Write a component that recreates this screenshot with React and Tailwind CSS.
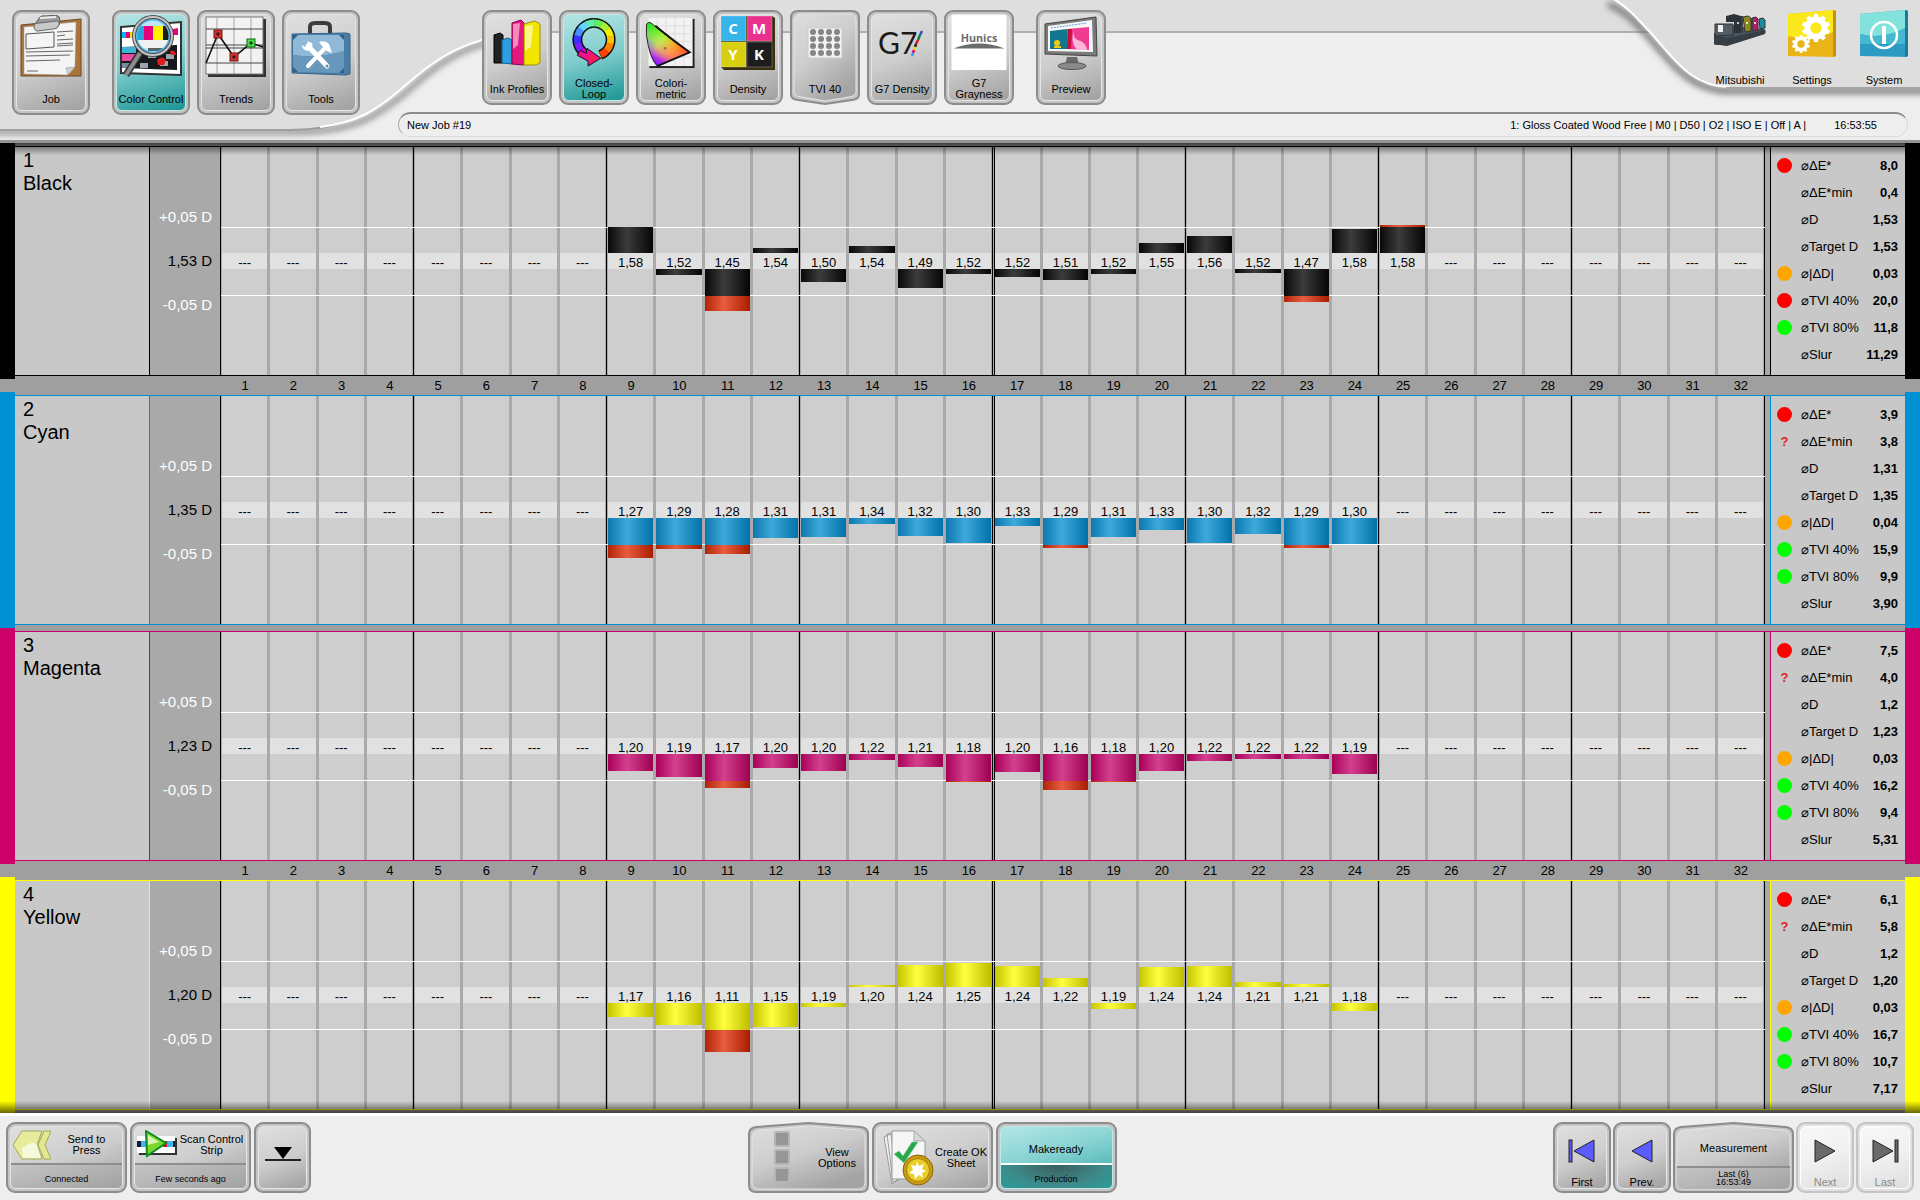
import clsx from "clsx";

const LIMIT_UP = 26;
const LIMIT_DOWN = 27;

const GREEN = "bg-[#00ff00]";
const RED = "bg-[#ff0000]";
const ORANGE = "bg-[#ffa500]";

// zones: [ink zone, density, deviation in px], positive deviations grow upwards
const INKS = [
  {
    no: 1,
    name: "Black",
    target: "1,53",
    side: "bg-black",
    border: "border-black",
    bar: "bg-[linear-gradient(90deg,#080808,#3c3c3c_42%,#050505)]",
    zones: [
      [9, "1,58", 26], [10, "1,52", -6], [11, "1,45", -42], [12, "1,54", 5],
      [13, "1,50", -13], [14, "1,54", 7], [15, "1,49", -19], [16, "1,52", -5],
      [17, "1,52", -8], [18, "1,51", -11], [19, "1,52", -5], [20, "1,55", 10],
      [21, "1,56", 17], [22, "1,52", -4], [23, "1,47", -33], [24, "1,58", 24],
      [25, "1,58", 28],
    ],
    stats: [
      [RED, "ΔE*", "8,0"],
      [null, "ΔE*min", "0,4"],
      [null, "D", "1,53"],
      [null, "Target D", "1,53"],
      [ORANGE, "|ΔD|", "0,03"],
      [RED, "TVI 40%", "20,0"],
      [GREEN, "TVI 80%", "11,8"],
      [null, "Slur", "11,29"],
    ],
  },
  {
    no: 2,
    name: "Cyan",
    target: "1,35",
    side: "bg-[#0091d4]",
    border: "border-[#0091d4]",
    bar: "bg-[linear-gradient(90deg,#0a77ae,#3fa9da_42%,#0072a8)]",
    zones: [
      [9, "1,27", -40], [10, "1,29", -31], [11, "1,28", -36], [12, "1,31", -20],
      [13, "1,31", -19], [14, "1,34", -6], [15, "1,32", -18], [16, "1,30", -25],
      [17, "1,33", -8], [18, "1,29", -30], [19, "1,31", -19], [20, "1,33", -12],
      [21, "1,30", -25], [22, "1,32", -16], [23, "1,29", -30], [24, "1,30", -26],
    ],
    stats: [
      [RED, "ΔE*", "3,9"],
      ["?", "ΔE*min", "3,8"],
      [null, "D", "1,31"],
      [null, "Target D", "1,35"],
      [ORANGE, "|ΔD|", "0,04"],
      [GREEN, "TVI 40%", "15,9"],
      [GREEN, "TVI 80%", "9,9"],
      [null, "Slur", "3,90"],
    ],
  },
  {
    no: 3,
    name: "Magenta",
    target: "1,23",
    side: "bg-[#cc0069]",
    border: "border-[#cc0069]",
    bar: "bg-[linear-gradient(90deg,#a80058,#d4408f_42%,#9e0052)]",
    zones: [
      [9, "1,20", -17], [10, "1,19", -23], [11, "1,17", -34], [12, "1,20", -14],
      [13, "1,20", -17], [14, "1,22", -6], [15, "1,21", -13], [16, "1,18", -28],
      [17, "1,20", -18], [18, "1,16", -36], [19, "1,18", -28], [20, "1,20", -17],
      [21, "1,22", -7], [22, "1,22", -5], [23, "1,22", -5], [24, "1,19", -20],
    ],
    stats: [
      [RED, "ΔE*", "7,5"],
      ["?", "ΔE*min", "4,0"],
      [null, "D", "1,2"],
      [null, "Target D", "1,23"],
      [ORANGE, "|ΔD|", "0,03"],
      [GREEN, "TVI 40%", "16,2"],
      [GREEN, "TVI 80%", "9,4"],
      [null, "Slur", "5,31"],
    ],
  },
  {
    no: 4,
    name: "Yellow",
    target: "1,20",
    side: "bg-[#ffff00]",
    border: "border-[#ffff00]",
    bar: "bg-[linear-gradient(90deg,#c4c400,#ffff40_42%,#bebe00)]",
    zones: [
      [9, "1,17", -14], [10, "1,16", -22], [11, "1,11", -49], [12, "1,15", -24],
      [13, "1,19", -4], [14, "1,20", 2], [15, "1,24", 22], [16, "1,25", 24],
      [17, "1,24", 21], [18, "1,22", 9], [19, "1,19", -6], [20, "1,24", 20],
      [21, "1,24", 21], [22, "1,21", 5], [23, "1,21", 3], [24, "1,18", -8],
    ],
    stats: [
      [RED, "ΔE*", "6,1"],
      ["?", "ΔE*min", "5,8"],
      [null, "D", "1,2"],
      [null, "Target D", "1,20"],
      [ORANGE, "|ΔD|", "0,03"],
      [GREEN, "TVI 40%", "16,7"],
      [GREEN, "TVI 80%", "10,7"],
      [null, "Slur", "7,17"],
    ],
  },
];

const GROUPS = [0, 1, 2, 3, 4, 5, 6, 7].map((g) => [1, 2, 3, 4].map((i) => g * 4 + i));

/* ---------- icons ---------- */

function JobIcon() {
  return (
    <svg width="62" height="62" viewBox="0 0 62 62">
      <path d="M1 10 L61 4 V61 L1 61 Z" fill="#a9733a" stroke="#6e4a22" />
      <path d="M4 12 L56 7 L55 52 L48 60 L4 59 Z" fill="#f4f4f4" stroke="#999" strokeWidth="0.5" />
      <path d="M55 52 L48 60 L46 53 Z" fill="#cfcfcf" stroke="#888" strokeWidth="0.5" />
      <path d="M6 19 L34 17 V32 L6 34 Z" fill="none" stroke="#555" />
      <path d="M37 17 L53 16 M37 21 L45 20 M37 25 L53 24 M37 29 L53 28 M37 31 L53 30 M6 37 L53 36 M6 41 L50 40 M6 46 L40 45 M7 56 H18" stroke="#666" />
      <path d="M18 5 Q20 0 26 1 L36 0 Q40 1 40 5 L39 10 L17 12 L14 11 Z" fill="#9b9b9b" stroke="#555" />
      <path d="M14 11 Q14 8 20 8 L36 6 Q40 6 39 10 Q38 14 33 14 L18 16 Q14 16 14 11 Z" fill="#c9c9c9" stroke="#666" />
      <path d="M20 3 L36 2" stroke="#eee" strokeWidth="2" />
    </svg>
  );
}

function ColorControlIcon() {
  return (
    <svg width="66" height="62" viewBox="0 0 66 62">
      <path d="M3 12 L63 7 V60 L3 58 Z" fill="#fff" stroke="#333" strokeWidth="2" />
      <path d="M4 17 H8 V23 H4 Z" fill="#00b7f0" />
      <path d="M8 17 H12 V23 H8 Z" fill="#e6007e" />
      <path d="M12 17 H16 V23 H12 Z" fill="#ffe800" />
      <path d="M55 14 L60 13 V20 H55 Z" fill="#e6007e" />
      <path d="M4 32 L59 30 V55 L4 53 Z" fill="#16181c" />
      <path d="M4 32 H18 V38 H4 Z" fill="#3db4d8" />
      <path d="M4 39 H17 V46 H4 Z" fill="#e64aa0" />
      <path d="M4 48 H14 V53 H4 Z" fill="#7b8b9c" />
      <path d="M30 38 H38 V43 H30 Z M48 39 H56 V44 H48 Z M22 48 H30 V53 H22 Z M42 46 H50 V51 H42 Z" fill="#9aa6ac" />
      <path d="M39 45 Q44 40 48 45 L46 50 H40 Z M52 36 Q57 34 58 40 H53 Z" fill="#e01b24" />
      <circle cx="35" cy="21" r="19" fill="#bfe6f7" />
      <clipPath id="lens">
        <circle cx="35" cy="21" r="18" />
      </clipPath>
      <g clipPath="url(#lens)">
        <rect x="16" y="11" width="10" height="14" fill="#2aa5dc" />
        <rect x="26" y="11" width="9" height="14" fill="#e6007e" />
        <rect x="35" y="11" width="10" height="14" fill="#fff000" />
        <rect x="45" y="11" width="10" height="14" fill="#1c1c1c" />
        <rect x="16" y="25" width="40" height="8" fill="#f1f1f1" />
        <rect x="30" y="33" width="16" height="3" fill="#56636b" />
      </g>
      <circle cx="35" cy="21" r="16.5" fill="none" stroke="#55b8ea" strokeWidth="2" />
      <circle cx="35" cy="21" r="19" fill="none" stroke="#4a4a4a" strokeWidth="4" />
      <circle cx="35" cy="21" r="19" fill="none" stroke="#c4c4c4" strokeWidth="2" />
      <path d="M22 38 L8 60" stroke="#333" strokeWidth="7" />
      <path d="M22 38 L8 60" stroke="#8d8d8d" strokeWidth="4" />
    </svg>
  );
}

function TrendsIcon() {
  return (
    <svg width="62" height="62" viewBox="0 0 62 62">
      <rect x="3" y="4" width="58" height="58" fill="#333" />
      <rect x="1" y="2" width="57" height="57" fill="#f2f2f2" stroke="#777" />
      <path d="M12 2 V59 M29 2 V59 M46 2 V59" stroke="#a5a5a5" />
      <path d="M1 14 H58 M1 30 H58 M1 33 H58 M1 48 H58" stroke="#444" />
      <path d="M1 48 L13 19 L29 42 L46 28 L58 32" fill="none" stroke="#111" strokeWidth="1.6" />
      <rect x="9" y="15" width="8" height="8" fill="#cf3434" stroke="#7a1010" />
      <rect x="25" y="38" width="8" height="8" fill="#cf3434" stroke="#7a1010" />
      <rect x="42" y="24" width="8" height="8" fill="#4be04b" stroke="#0c6a0c" />
      <path d="M13 17 V21 M11 19 H15 M29 40 V44 M27 42 H31 M46 26 V30 M44 28 H48" stroke="#111" />
    </svg>
  );
}

function ToolsIcon() {
  return (
    <svg width="62" height="62" viewBox="0 0 62 62">
      <path d="M20 19 V12 Q20 8 25 8 H35 Q40 8 40 12 V19" fill="none" stroke="#3c3c3c" strokeWidth="4" />
      <path d="M2 19 L56 18 L60 19 V59 L56 60 L2 58 Z" fill="#4a7da5" stroke="#39658a" />
      <path d="M3 20 H54 V36 Q28 44 3 40 Z" fill="#8fb9d6" />
      <path d="M3 40 Q28 44 54 36 V58 L3 57 Z" fill="#6797bb" />
      <path d="M3 20 h5 l-5 5z M54 20 h-5 l5 5z M3 57 h5 l-5 -5z M54 58 h-5 l5 -5z" fill="#2f5f8a" />
      <path d="M18 31 L37 51" stroke="#fff" strokeWidth="5" strokeLinecap="round" />
      <path d="M12 30 Q12 35 18 36 Q24 34 22 28 L17 26 L19 31 L15 32 Z" fill="#fff" />
      <path d="M36 32 L18 51" stroke="#fff" strokeWidth="4" strokeLinecap="round" />
      <path d="M29 27 Q35 25 39 29 L42 38 L37 36 L33 32 Z" fill="#fff" />
      <circle cx="37" cy="51" r="1.5" fill="#5d8db1" />
    </svg>
  );
}

function InkProfilesIcon() {
  return (
    <svg width="56" height="56" viewBox="0 0 56 56">
      <path d="M5 20 L11 18 L14 20 V48 L5 48 Z" fill="#222" stroke="#000" />
      <path d="M13 25 L19 23 L23 25 V49 L13 48 Z" fill="#2d9fe0" stroke="#0c5f94" />
      <path d="M23 8 L32 5 L35 8 V50 L23 49 Z" fill="#e3187c" stroke="#8f004a" />
      <path d="M24 9 L31 8 L29 30 L24 34 Z" fill="#f58abf" />
      <path d="M35 9 L46 6 L51 9 V48 L47 50 L35 50 Z" fill="#f2e500" stroke="#9c9300" />
      <path d="M36 11 L44 10 L42 32 L36 36 Z" fill="#fbf58a" />
    </svg>
  );
}

// arc of the loop, angles in degrees clockwise from the top
function arc(from, to) {
  const p = (a) => {
    const r = ((a - 90) * Math.PI) / 180;
    return `${28 + 17 * Math.cos(r)} ${25 + 17 * Math.sin(r)}`;
  };
  return `M${p(from)} A17 17 0 0 1 ${p(to)}`;
}

function ClosedLoopIcon() {
  const colors = [
    "#d000d0", "#7a20ff", "#3a30ff", "#4a90ff", "#60d8ff", "#60f0b0",
    "#60f060", "#a8f030", "#f0f000", "#ffc000", "#ff8000", "#ff4000",
  ];
  return (
    <svg width="56" height="56" viewBox="0 0 56 56">
      <path d={arc(205, 359)} fill="none" stroke="#111" strokeWidth="10" />
      <path d={arc(359, 518)} fill="none" stroke="#111" strokeWidth="10" />
      {colors.map((c, i) => (
        <path key={c} d={arc(206 + i * 25.8, 233 + i * 25.8)} fill="none" stroke={c} strokeWidth="7" />
      ))}
      <path d="M14 36 L20 39 L21 34 L35 44 L22 52 L22 47 L11 41 Z" fill="#f0108c" stroke="#111" />
      <path d="M23 40 L33 44 L24 49 Z" fill="#f42050" />
    </svg>
  );
}

function ColorimetricIcon() {
  return (
    <svg width="56" height="56" viewBox="0 0 56 56">
      <defs>
        <linearGradient id="gamutA" x1="0" y1="0" x2="1" y2="0.9">
          <stop offset="0" stopColor="#10e020" />
          <stop offset="0.4" stopColor="#b0f030" />
          <stop offset="0.65" stopColor="#ff9010" />
          <stop offset="1" stopColor="#ff1020" />
        </linearGradient>
        <linearGradient id="gamutB" x1="0.1" y1="1" x2="0.5" y2="0.35">
          <stop offset="0" stopColor="#4010ff" />
          <stop offset="0.3" stopColor="#b020ff" stopOpacity="0.9" />
          <stop offset="0.6" stopColor="#ff90b8" stopOpacity="0.4" />
          <stop offset="1" stopColor="#fff" stopOpacity="0" />
        </linearGradient>
        <linearGradient id="gamutC" x1="0" y1="0" x2="1" y2="0">
          <stop offset="0" stopColor="#20c8e0" stopOpacity="0.9" />
          <stop offset="0.4" stopColor="#20c8e0" stopOpacity="0" />
        </linearGradient>
      </defs>
      <rect x="6" y="4" width="46" height="50" fill="#222" />
      <rect x="5" y="3" width="45" height="49" fill="#f2f2f2" />
      <path d="M5 11 H50 M5 19 H50 M5 27 H50 M5 35 H50 M5 43 H50 M14 3 V52 M23 3 V52 M32 3 V52 M41 3 V52" stroke="#dcdce2" />
      <path d="M3 10 Q5 5 10 10 Q24 22 47 38 L14 52 Q6 44 3 20 Z" fill="url(#gamutA)" />
      <path d="M3 24 L14 52 L28 46 L14 30 Z" fill="url(#gamutC)" />
      <path d="M3 10 Q5 5 10 10 Q24 22 47 38 L14 52 Q6 44 3 20 Z" fill="url(#gamutB)" stroke="#222" />
      <path d="M12 11 Q25 22 47 38 L14 52" fill="none" stroke="#111" strokeWidth="2" />
      <circle cx="22" cy="34" r="1.5" fill="#a66" />
    </svg>
  );
}

function DensityIcon() {
  const tiles = [
    [1, 1, "#35b5ea", "C"],
    [27, 1, "#ea2f8c", "M"],
    [1, 27, "#d8cf10", "Y"],
    [27, 27, "#1d1d1d", "K"],
  ];
  return (
    <svg width="56" height="56" viewBox="0 0 56 56">
      <path d="M1 1 H52 L55 3 V55 H4 L1 52 Z" fill="#3a3010" />
      {tiles.map(([x, y, fill, t]) => (
        <g key={t}>
          <rect x={x} y={y} width="25" height="25" fill={fill} stroke="#fff" strokeOpacity="0.25" />
          <text x={x + 12} y={y + 18} textAnchor="middle" fontFamily="Open Sans, sans-serif" fontWeight="700" fontSize="15" fill="#fff">
            {t}
          </text>
        </g>
      ))}
    </svg>
  );
}

function TviIcon() {
  const steps = [0, 1, 2, 3];
  return (
    <svg width="56" height="56" viewBox="0 0 56 56">
      <rect x="11" y="13" width="34" height="30" fill="#f2f2f2" stroke="#c9c9c9" />
      {steps.map((r) => steps.map((c) => <circle key={`${r}${c}`} cx={16 + c * 8} cy={17 + r * 7} r="3" fill="#858585" />))}
    </svg>
  );
}

function G7Icon() {
  return (
    <svg width="56" height="56" viewBox="0 0 56 56">
      <text x="4" y="39" fontFamily="Lato, sans-serif" fontSize="30" fill="#1a1a1a">
        G7
      </text>
      <path d="M48 16 L46 20" stroke="#3050c0" strokeWidth="2.5" />
      <path d="M46 20 L44 25" stroke="#108040" strokeWidth="2.5" />
      <path d="M44 25 L42 29" stroke="#e01020" strokeWidth="2.5" />
      <path d="M42 29 L41 32" stroke="#222" strokeWidth="2.5" />
      <path d="M41 32 L40 35" stroke="#ffe000" strokeWidth="2.5" />
      <path d="M40 35 L39 38" stroke="#e6007e" strokeWidth="2.5" />
      <path d="M39 38 L38 41" stroke="#20a8f0" strokeWidth="2.5" />
    </svg>
  );
}

function HunicsIcon() {
  return (
    <svg width="56" height="56" viewBox="0 0 56 56">
      <rect width="56" height="56" fill="#fff" />
      <text x="28" y="27" textAnchor="middle" fontFamily="Open Sans, sans-serif" fontWeight="700" fontSize="11" fill="#6c6c6c">
        Hunics
      </text>
      <path d="M2 34 Q28 24 54 34 Z" fill="#6c6c6c" />
    </svg>
  );
}

function PreviewIcon() {
  return (
    <svg width="56" height="56" viewBox="0 0 56 56">
      <path d="M24 42 H34 L36 50 H22 Z" fill="#6a6a6a" />
      <ellipse cx="29" cy="51" rx="14" ry="3.5" fill="#8a8a8a" stroke="#555" />
      <path d="M2 9 L53 2 L54 41 L2 39 Z" fill="#7a7a7a" stroke="#444" />
      <path d="M5 11 L49 5 L50 37 L5 36 Z" fill="#f7f7f7" />
      <path d="M7 16 L24 14 V34 H7 Z" fill="#12768e" />
      <path d="M24 14 L46 12 V35 L24 34 Z" fill="#ef3c92" />
      <path d="M32 14 Q28 24 38 26 Q44 30 44 35 H34 Q26 26 32 14 Z" fill="#fbb6d8" />
      <path d="M25 14 H29 L28 34 H24 Z" fill="#c40f3c" />
      <circle cx="14" cy="28" r="3" fill="#f0c818" />
      <path d="M11 32 H18" stroke="#f0c818" strokeWidth="2" />
      <path d="M8 13 L44 8" stroke="#6a9fd0" strokeDasharray="2 1" />
    </svg>
  );
}

function PressIcon() {
  return (
    <svg width="52" height="48" viewBox="0 0 52 48">
      <path d="M0 24 L10 15 L51 20 V23 L13 35 L0 34 Z" fill="#4a545c" stroke="#2c343a" />
      <path d="M0 25 L13 28 L51 20 V24 L13 36 L0 34 Z" fill="#353e45" />
      <path d="M1 14 H19 V25 L1 26 Z" fill="#525d66" stroke="#2c343a" />
      <path d="M4 15 H9 V22 H4 Z" fill="#eee" />
      <path d="M12 6 L20 4 L27 6 V23 H20 V12 L12 12 Z" fill="#2b3238" />
      <path d="M29 7 L34 6 L37 8 V21 L31 22 Z" fill="#8f8a20" stroke="#333" />
      <path d="M38 8 L42 7 L44 9 V20 L39 21 Z" fill="#b81a70" stroke="#333" />
      <path d="M45 9 L49 8 L51 10 V18 L46 19 Z" fill="#1a8c9c" stroke="#333" />
      <path d="M28 6 V22 M38 8 V21" stroke="#3a4248" strokeWidth="2" />
      <circle cx="24" cy="13" r="1" fill="#fff" />
      <circle cx="33" cy="13" r="1" fill="#fff" />
      <circle cx="41" cy="13" r="1" fill="#fff" />
    </svg>
  );
}

function Gear({ cx, cy, r }) {
  const teeth = [0, 36, 72, 108, 144, 180, 216, 252, 288, 324];
  return (
    <g>
      <circle cx={cx} cy={cy} r={r * 0.62} fill="none" stroke="#fff" strokeWidth={r * 0.42} />
      {teeth.map((a) => (
        <rect key={a} x={cx - r * 0.15} y={cy - r} width={r * 0.3} height={r * 0.35} fill="#fff" transform={`rotate(${a} ${cx} ${cy})`} />
      ))}
    </g>
  );
}

function SettingsIcon() {
  return (
    <svg width="48" height="48" viewBox="0 0 48 48">
      <path d="M0 4 L46 0 L48 1 V46 L46 47 L0 46 Z" fill="#e8b418" />
      <path d="M0 4 L45 0 V22 Q22 32 0 26 Z" fill="#fbe81c" />
      <path d="M45 0 L48 1 V46 L45 47 Z" fill="#c89010" />
      <Gear cx={28} cy={18} r={14} />
      <Gear cx={13} cy={34} r={9} />
    </svg>
  );
}

function SystemIcon() {
  return (
    <svg width="48" height="48" viewBox="0 0 48 48">
      <path d="M0 4 L46 0 L48 1 V46 L46 47 L0 46 Z" fill="#2d9cc4" />
      <path d="M0 4 L45 0 V18 Q22 30 0 24 Z" fill="#84e2dc" />
      <path d="M0 24 Q22 30 45 18 V34 H0 Z" fill="#46b8d0" />
      <path d="M45 0 L48 1 V46 L45 47 Z" fill="#1a7c9c" />
      <circle cx="24" cy="25" r="13" fill="none" stroke="#fff" strokeWidth="2.5" />
      <path d="M24 16 V34" stroke="#fff" strokeWidth="4" />
    </svg>
  );
}

function SendIcon() {
  return (
    <svg width="38" height="30" viewBox="0 0 38 30">
      <path d="M0 15 L9 1 H29 L24 15 L29 29 H9 Z" fill="#e6ec9c" stroke="#a3a85c" />
      <path d="M9 18 Q20 10 24 15 L28 28 H10 Z" fill="#f6fadc" />
      <path d="M31 1 H38 L32 15 L38 29 H31 L25 15 Z" fill="#e3e88e" stroke="#a3a85c" />
    </svg>
  );
}

function ScanIcon() {
  return (
    <svg width="40" height="30" viewBox="0 0 40 30">
      <rect x="2" y="8" width="38" height="17" fill="#333" />
      <rect x="0" y="6" width="38" height="17" fill="#fff" />
      <path d="M0 11 H4 V17 H0 Z" fill="#101838" />
      <path d="M4 11 H10 V17 H4 Z M30 11 H36 V17 H30 Z" fill="#3eb4f4" />
      <path d="M26 11 H30 V17 H26 Z" fill="#e01010" />
      <path d="M36 11 H38 V17 H36 Z" fill="#222" />
      <path d="M9 1 L29 13 L10 26 Z" fill="#7ad82c" stroke="#0c8a28" strokeWidth="2" />
      <path d="M11 5 L22 12 L11 15 Z" fill="#d8f4b0" />
    </svg>
  );
}

function CollapseIcon() {
  return (
    <svg width="36" height="22" viewBox="0 0 36 22">
      <path d="M9 0 H27 L18 12 Z" fill="#000" />
      <path d="M0 13 H36" stroke="#222" strokeWidth="2" />
    </svg>
  );
}

function SheetIcon() {
  return (
    <svg width="52" height="56" viewBox="0 0 52 56">
      <path d="M1 7 L8 4 L14 50 L9 54 Z M4 4 L12 2 L16 50 L10 52 Z" fill="#f1f1f1" stroke="#888" strokeWidth="0.8" />
      <path d="M9 1 H31 L42 11 V49 H9 Z" fill="#f6f6f6" stroke="#999" />
      <path d="M31 1 V11 H42 Z" fill="#d8d8d8" stroke="#aaa" />
      <path d="M11 24 L16 21 L20 26 L29 12 L35 12 L21 33 Z" fill="#28a84a" stroke="#7fce90" strokeWidth="0.6" />
      <circle cx="35" cy="40" r="15" fill="#c99a14" stroke="#8a6508" />
      <circle cx="35" cy="40" r="11.5" fill="#e8cf28" stroke="#a8800c" />
      <path d="M34 31 L36 36 L41 34 L39 39 L43 41 L39 43 L40 48 L36 45 L32 49 L31 44 L26 43 L30 40 L28 35 L33 36 Z" fill="#fff" />
    </svg>
  );
}

function ViewIcon() {
  return (
    <svg width="16" height="54" viewBox="0 0 16 54">
      <rect x="1" y="1" width="14" height="14" rx="1" fill="#969696" stroke="#b5b5b5" strokeWidth="2" />
      <rect x="1" y="19" width="14" height="14" rx="1" fill="#969696" stroke="#b5b5b5" strokeWidth="2" />
      <rect x="1" y="37" width="14" height="14" rx="1" fill="#969696" stroke="#b5b5b5" strokeWidth="2" />
    </svg>
  );
}

function StepIcon({ forward, edge, fill }) {
  return (
    <svg width="28" height="24" viewBox="0 0 28 24" className={clsx(forward && "rotate-180")}>
      {edge && <rect x="1" y="1" width="3" height="22" fill={fill} stroke="#222" />}
      <path d={edge ? "M6 12 L26 1 V23 Z" : "M4 12 L24 1 V23 Z"} fill={fill} stroke="#222" />
    </svg>
  );
}

/* ---------- buttons ---------- */

// Frame with a peak on its top or bottom edge, drawn behind the button content
function PeakFrame({ w, h, bottom }) {
  const path = (i) => {
    const l = i;
    const r = w - i;
    const b = h - i;
    const mid = w / 2;
    if (bottom) {
      return `M${l + 7} ${i} H${r - 7} Q${r} ${i} ${r} ${i + 7} V${b - 9} Q${r} ${b - 5} ${r - 7} ${b - 4} L${mid} ${b} L${l + 7} ${b - 4} Q${l} ${b - 5} ${l} ${b - 9} V${i + 7} Q${l} ${i} ${l + 7} ${i} Z`;
    }
    return `M${l + 7} ${i + 4} L${mid} ${i} L${r - 7} ${i + 4} Q${r} ${i + 5} ${r} ${i + 11} V${b - 7} Q${r} ${b} ${r - 7} ${b} H${l + 7} Q${l} ${b} ${l} ${b - 7} V${i + 11} Q${l} ${i + 5} ${l + 7} ${i + 4} Z`;
  };
  return (
    <svg width={w} height={h} className="absolute inset-0">
      <defs>
        <linearGradient id={`peak${w}`} x1="0" y1="0" x2="0.6" y2="1">
          <stop offset="0" stopColor="#dedede" />
          <stop offset="0.5" stopColor="#cdcdcd" />
          <stop offset="1" stopColor="#a4a4a4" />
        </linearGradient>
      </defs>
      <path d={path(1)} fill="#c4c4c4" stroke="#8c8c8c" strokeWidth="2" />
      <path d={path(4)} fill={`url(#peak${w})`} stroke="#e6e6e6" />
    </svg>
  );
}

function Shell({ size, face = "normal", className, disabled, pressed, children }) {
  return (
    <button
      type="button"
      disabled={disabled}
      aria-pressed={pressed}
      className={clsx(
        "shrink-0 rounded-[9px] border-2 p-0.5",
        disabled ? "border-[#c4c4c4] bg-[#e0e0e0]" : "border-[#8c8c8c] bg-[#c4c4c4]",
        size
      )}
    >
      <span
        className={clsx(
          "flex h-full w-full flex-col overflow-hidden rounded-md border",
          face === "normal" && "border-[#e6e6e6] bg-[linear-gradient(160deg,#dfdfdf,#cecece_50%,#a0a0a0)]",
          face === "active" && "border-[#c4e8e8] bg-[linear-gradient(165deg,#b4e4e4,#7ecccc_50%,#1c9494)]",
          face === "disabled" && "border-white bg-[linear-gradient(160deg,#f8f8f8,#f0f0f0_50%,#dedede)]",
          className
        )}
      >
        {children}
      </span>
    </button>
  );
}

function TabButton({ icon, label, active }) {
  return (
    <Shell size="h-[105px] w-[78px]" face={active ? "active" : "normal"} pressed={!!active} className="items-center">
      {icon}
      <span className="mt-[17px] whitespace-nowrap">{label}</span>
    </Shell>
  );
}

function ModeButton({ icon, label, active }) {
  return (
    <Shell size="h-[95px] w-[70px]" face={active ? "active" : "normal"} pressed={!!active} className="items-center">
      {icon}
      <span className="flex flex-1 items-center pt-2 text-center whitespace-pre">{label}</span>
    </Shell>
  );
}

function SplitButton({ icon, label, sub }) {
  return (
    <Shell size="h-[71px] w-[121px]">
      <span className="flex h-9 items-center pl-0.5">
        {icon}
        <span className="flex-1 text-center whitespace-pre">{label}</span>
      </span>
      <span className="flex flex-1 items-center justify-center border-t-2 border-[#8e8e8e] bg-[linear-gradient(165deg,#c4c4c4,#a2a2a2)] pt-1 text-[9px] leading-[10px]">
        {sub}
      </span>
    </Shell>
  );
}

function StepButton({ label, disabled, forward, edge }) {
  return (
    <Shell size="h-[71px] w-[58px]" face={disabled ? "disabled" : "normal"} disabled={disabled} className="items-center pt-3">
      <StepIcon forward={forward} edge={edge} fill={disabled ? "#6a6a6a" : "#5b5bff"} />
      <span className={clsx("mt-3.5", disabled && "text-[#888]")}>{label}</span>
    </Shell>
  );
}

/* ---------- header ---------- */

function Header() {
  return (
    <header className="relative h-[143px] border-b-[3px] border-[#949494] bg-[#eeeeee]">
      <div className="absolute inset-x-0 top-0 h-[33px] border-b-2 border-[#b0b0b0] bg-[#dedede]" />
      <svg width="540" height="140" className="absolute top-0 left-0">
        <defs>
          <filter id="soft" x="-10%" y="-10%" width="120%" height="130%">
            <feGaussianBlur stdDeviation="3" />
          </filter>
        </defs>
        <path d="M0 31 H540 V140 H0 Z" fill="#eeeeee" />
        <path d="M-9 132 H292 C352 132 373 119 404 94 C434 67 468 36 540 35" fill="none" stroke="#888" strokeWidth="5" filter="url(#soft)" />
        <path d="M0 129 H290 C350 129 370 115 400 90 C430 64 465 32 540 32 V0 H0 Z" fill="#dedede" />
        <path d="M0 130 H290 C310 130 330 127 345 122" fill="none" stroke="#9e9e9e" strokeWidth="2" />
        <path d="M320 127 C358 122 375 111 400 90 C430 64 465 32 540 32" fill="none" stroke="#fff" strokeWidth="2" />
      </svg>
      <svg width="320" height="140" className="absolute top-0 right-0">
        <path d="M8 4 C28 12 36 24 47 35 C68 58 88 91 130 91 H330" fill="none" stroke="#777" strokeWidth="6" filter="url(#soft)" />
        <path d="M12 -2 C30 8 40 22 50 32 C72 56 90 87 130 87 H320 V-2 Z" fill="#dedede" />
        <path d="M12 -2 C30 8 40 22 50 32 C72 56 90 87 130 87" fill="none" stroke="#fff" strokeWidth="2" />
        <path d="M126 88 H320" stroke="#a4a4a4" strokeWidth="2" />
      </svg>

      <div className="relative flex items-start pt-2.5 pl-3">
        <nav className="flex gap-[7px]">
          <div className="mr-[15px]">
            <TabButton icon={<JobIcon />} label="Job" />
          </div>
          <TabButton icon={<ColorControlIcon />} label="Color Control" active />
          <TabButton icon={<TrendsIcon />} label="Trends" />
          <TabButton icon={<ToolsIcon />} label="Tools" />
        </nav>
        <div className="ml-[122px] flex gap-[7px]">
          <ModeButton icon={<InkProfilesIcon />} label="Ink Profiles" />
          <ModeButton icon={<ClosedLoopIcon />} label={"Closed-\nLoop"} active />
          <ModeButton icon={<ColorimetricIcon />} label={"Colori-\nmetric"} />
          <ModeButton icon={<DensityIcon />} label="Density" />
          <button type="button" className="relative h-[95px] w-[70px]">
            <PeakFrame w={70} h={95} bottom />
            <span className="relative flex h-full flex-col items-center py-[5px]">
              <TviIcon />
              <span className="flex flex-1 items-center pt-2">TVI 40</span>
            </span>
          </button>
          <ModeButton icon={<G7Icon />} label="G7 Density" />
          <ModeButton icon={<HunicsIcon />} label={"G7\nGrayness"} />
          <div className="ml-[15px]">
            <ModeButton icon={<PreviewIcon />} label="Preview" />
          </div>
        </div>
        <div className="ml-auto flex">
          <button type="button" className="flex w-[72px] flex-col items-center gap-[17px]">
            <PressIcon />
            Mitsubishi
          </button>
          <button type="button" className="flex w-[72px] flex-col items-center gap-[17px]">
            <SettingsIcon />
            Settings
          </button>
          <button type="button" className="flex w-[72px] flex-col items-center gap-[17px]">
            <SystemIcon />
            System
          </button>
        </div>
      </div>

      <div className="absolute right-3 bottom-[3px] left-[398px] flex h-[25px] items-center rounded-full border border-t-2 border-[#dadada] border-t-[#8c8c8c] border-l-[#a8a8a8] pr-[30px] pl-2">
        <span>New Job #19</span>
        <span className="ml-auto">1: Gloss Coated Wood Free | M0 | D50 | O2 | ISO E | Off | A |</span>
        <span className="ml-7">16:53:55</span>
      </div>
    </header>
  );
}

/* ---------- ink rows ---------- */

function Bar({ size, ink }) {
  const up = size > 0;
  const limit = up ? LIMIT_UP : LIMIT_DOWN;
  const length = Math.abs(size);
  const over = Math.max(0, length - limit);
  return (
    <div className={clsx("relative z-10 flex", up ? "flex-col-reverse" : "flex-col")}>
      <div className={ink.bar} style={{ height: length - over }} />
      {over > 0 && <div className="bg-[linear-gradient(90deg,#b02408,#e85c40_42%,#a81c00)]" style={{ height: over }} />}
    </div>
  );
}

function Zone({ no, ink, last }) {
  const zone = ink.zones.find((z) => z[0] === no);
  const size = zone ? zone[2] : 0;
  return (
    <div className={clsx("flex min-w-0 flex-1 flex-col border-[#a9a9a9]", last ? "border-r" : "border-r-[3px]")}>
      <div className="flex h-[106px] flex-col justify-end">{size > 0 && <Bar size={size} ink={ink} />}</div>
      <div className="h-4 bg-[#e1e1e1] text-center text-[13px] leading-5">{zone ? zone[1] : "---"}</div>
      {size < 0 && <Bar size={size} ink={ink} />}
    </div>
  );
}

function Stats({ ink }) {
  return (
    <table className="w-full text-[13px] leading-[15px]">
      <tbody>
        {ink.stats.map(([mark, label, value]) => (
          <tr key={label} className="h-[27px]">
            <td className="w-[30px] pl-1.5">
              {mark === "?" && <span className="block w-[15px] text-center font-bold text-[#e02020]">?</span>}
              {mark && mark !== "?" && <span className={clsx("block size-[15px] rounded-full", mark)} />}
            </td>
            <th scope="row" className="text-left font-normal whitespace-nowrap">
              <span className="inline-block w-2 text-[13px]">⌀</span>
              {label}
            </th>
            <td className="pr-[7px] text-right font-bold">{value}</td>
          </tr>
        ))}
      </tbody>
    </table>
  );
}

function InkRow({ ink }) {
  return (
    <section className="flex">
      <div className={clsx("w-[15px] shrink-0", ink.side)} />
      <div className="min-w-0 flex-1 py-[3px]">
        <div className={clsx("flex h-[230px] border-y", ink.border)}>
          <h2 className="w-[134px] shrink-0 bg-[#c8c8c8] pt-0.5 pl-2 text-[20px] leading-[23px]">
            {ink.no}
            <br />
            {ink.name}
          </h2>
          <div className={clsx("flex w-[71px] shrink-0 flex-col border-l bg-[#a9a9a9] pt-12 pr-2 text-right text-[15px] leading-[44px] text-white", ink.border)}>
            <span>+0,05 D</span>
            <span className="text-black">{ink.target} D</span>
            <span>-0,05 D</span>
          </div>
          <div className="relative flex min-w-0 flex-1 border-l border-black bg-[#cecece]">
            {GROUPS.map((group, g) => (
              <div key={g} className="flex min-w-0 flex-1 border-r border-black">
                {/* the press centre is marked by a double line */}
                <div className={clsx("shrink-0 bg-[#a9a9a9]", g === 4 ? "w-0.5 border-r border-black" : "w-px")} />
                {group.map((no, i) => (
                  <Zone key={no} no={no} ink={ink} last={i === 3} />
                ))}
              </div>
            ))}
            <div className="absolute inset-x-0 top-20 h-px bg-white" />
            <div className="absolute inset-x-0 top-[148px] h-px bg-white" />
          </div>
          <div className="w-[140px] shrink-0 bg-[#a9a9a9] pl-[5px]">
            <div className={clsx("h-full border-l bg-[#c8c8c8] pt-[5px]", ink.border)}>
              <Stats ink={ink} />
            </div>
          </div>
        </div>
      </div>
      <div className={clsx("w-[15px] shrink-0", ink.side)} />
    </section>
  );
}

function ZoneNumbers() {
  return (
    <div className="flex pr-[155px] pl-[221px] text-[13px] leading-[13px]">
      {GROUPS.flat().map((no) => (
        <span key={no} className="flex-1 text-center">
          {no}
        </span>
      ))}
    </div>
  );
}

/* ---------- footer ---------- */

function Footer() {
  return (
    <footer className="flex flex-1 items-start justify-between border-t-[3px] border-white bg-[#eeeeee] px-1.5 pt-1.5 pb-[7px]">
      <div className="flex gap-[3px]">
        <SplitButton icon={<SendIcon />} label={"Send to\nPress"} sub="Connected" />
        <SplitButton icon={<ScanIcon />} label={"Scan Control\nStrip"} sub="Few seconds ago" />
        <Shell size="h-[71px] w-[57px]" className="items-center justify-center">
          <CollapseIcon />
        </Shell>
      </div>

      <div className="flex gap-[3px]">
        <button type="button" className="relative h-[71px] w-[121px]">
          <PeakFrame w={121} h={71} />
          <span className="relative flex items-center pl-[26px]">
            <ViewIcon />
            <span className="flex-1 pl-4 text-center whitespace-pre">{"View\nOptions"}</span>
          </span>
        </button>
        <Shell size="h-[71px] w-[121px]" className="justify-center">
          <span className="flex items-center pl-1.5">
            <SheetIcon />
            <span className="flex-1 text-center whitespace-nowrap">
              Create OK
              <br />
              Sheet
            </span>
          </span>
        </Shell>
        <Shell size="h-[71px] w-[121px]" face="active" pressed>
          <span className="flex h-9 items-center justify-center bg-[linear-gradient(165deg,#b4e6e6,#86d2d2_60%,#5cbcbc)] pt-2">Makeready</span>
          <span className="flex flex-1 items-center justify-center border-t-2 border-white bg-[radial-gradient(ellipse_at_50%_0%,#3c5c5c,#3d8a8a_60%,#2a9c9c)] pt-1 text-[9px] leading-[10px]">
            Production
          </span>
        </Shell>
      </div>

      <div className="flex gap-0.5">
        <StepButton label="First" edge />
        <StepButton label="Prev." />
        <button type="button" className="relative h-[71px] w-[121px]">
          <PeakFrame w={121} h={71} />
          <span className="relative flex h-full flex-col px-1 pt-2 pb-1">
            <span className="flex h-9 items-center justify-center">Measurement</span>
            <span className="flex flex-1 flex-col items-center rounded-b-md border-t-2 border-[#8e8e8e] bg-[linear-gradient(165deg,#c4c4c4,#a2a2a2)] pt-0.5 text-[9px] leading-[8px]">
              <span>Last (6)</span>
              <span>16:53:49</span>
            </span>
          </span>
        </button>
        <StepButton label="Next" disabled forward />
        <StepButton label="Last" disabled forward edge />
      </div>
    </footer>
  );
}

export default function App() {
  return (
    <div className="flex min-h-screen flex-col bg-[#eeeeee] font-['Liberation_Sans',Arial,sans-serif] text-[11px] leading-[11px] text-black">
      <Header />
      <main className="relative bg-[#9f9f9f]">
        <InkRow ink={INKS[0]} />
        <ZoneNumbers />
        <InkRow ink={INKS[1]} />
        <InkRow ink={INKS[2]} />
        <ZoneNumbers />
        <InkRow ink={INKS[3]} />
        <div className="pointer-events-none absolute inset-x-0 top-0 h-3 bg-linear-to-b from-black/60 to-transparent" />
        <div className="pointer-events-none absolute inset-x-0 bottom-0 h-3 bg-linear-to-t from-black/60 to-transparent" />
      </main>
      <Footer />
    </div>
  );
}
